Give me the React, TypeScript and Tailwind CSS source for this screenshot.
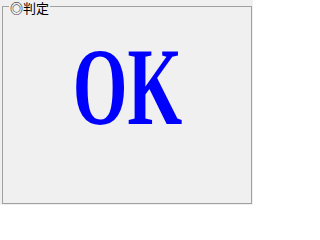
export default function App() {
  return (
    <div className="w-[253px] h-[205px] bg-[#f0f0f0] pt-[6px] pl-[2px]">
      <div className="relative w-[250px] h-[198px] border border-[#a0a0a0] flex justify-center pt-[25px]">
        <span className="absolute left-[6px] top-[-6px] px-[1px] bg-[#f0f0f0] text-[13px] leading-[14px] text-black font-['Noto_Sans_CJK_JP','Noto_Sans',sans-serif]">
          ◎判定
        </span>
        <div className="ml-[1px] h-[110px] text-[110px] leading-none font-bold text-[#0000ff] font-['Liberation_Serif',serif] scale-x-[0.64]">
          OK
        </div>
      </div>
    </div>
  );
}
